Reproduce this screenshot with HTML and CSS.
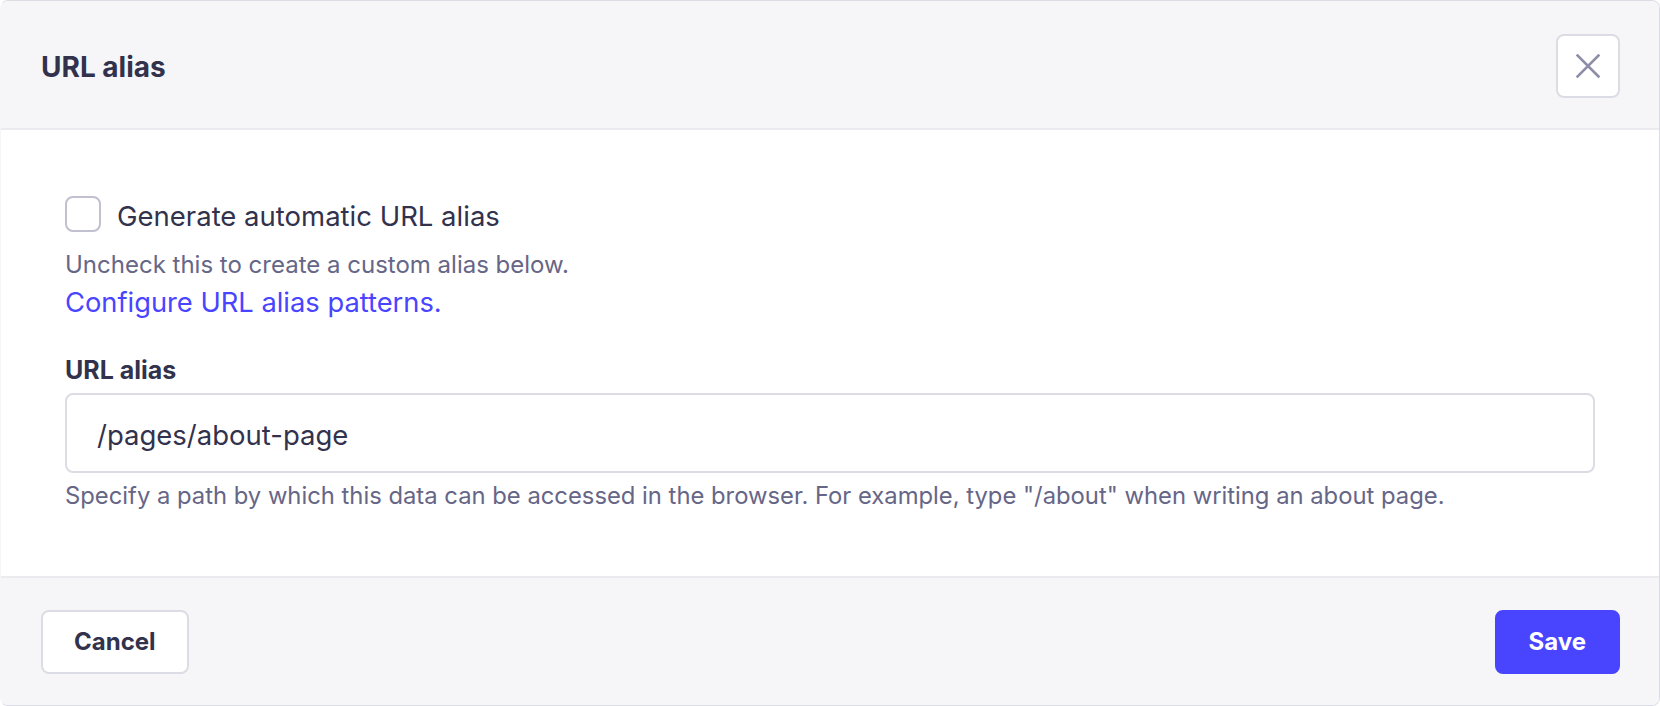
FILE: index.html
```html
<!DOCTYPE html>
<html lang="en">
<head>
<meta charset="utf-8">
<title>URL alias</title>
<link rel="stylesheet" href="styles.css">
</head>
<body>
<div class="modal">
  <header class="modal-header">
    <h2 class="modal-title">URL alias</h2>
    <button class="icon-button" type="button" aria-label="Close">
      <svg width="24" height="24" viewBox="0 0 24 24" fill="none">
        <path d="M1.5 1.5 L22.5 22.5 M22.5 1.5 L1.5 22.5" stroke="#8e8ea9" stroke-width="2.6" stroke-linecap="square"/>
      </svg>
    </button>
  </header>
  <main class="modal-body">
    <label class="check-row">
      <span class="checkbox"></span>
      <span class="check-label">Generate automatic URL alias</span>
    </label>
    <p class="hint hint-first">Uncheck this to create a custom alias below.</p>
    <a class="link" href="#">Configure URL alias patterns.</a>
    <div class="field-label">URL alias</div>
    <div class="input">/pages/about-page</div>
    <p class="hint hint-field">Specify a path by which this data can be accessed in the browser. For example, type "/about" when writing an about page.</p>
  </main>
  <footer class="modal-footer">
    <button class="btn btn-secondary" type="button">Cancel</button>
    <button class="btn btn-primary" type="button">Save</button>
  </footer>
</div>
</body>
</html>
```
FILE: styles.css
```css
html, body {
  margin: 0;
  padding: 0;
  background: #ffffff;
}
body {
  font-family: Inter, "Noto Sans", "Liberation Sans", sans-serif;
  color: #32324d;
}
.modal {
  width: 1660px;
  height: 706px;
  box-sizing: border-box;
  border: 1px solid #dcdce4;
  border-left-color: #f6f6f9;
  border-radius: 8px;
  overflow: hidden;
  display: flex;
  flex-direction: column;
  background: #ffffff;
}
.modal-header {
  height: 129px;
  box-sizing: border-box;
  flex: none;
  background: #f6f6f9;
  border-bottom: 2px solid #eaeaef;
  display: flex;
  align-items: center;
  justify-content: space-between;
  padding: 2px 39px 0 40px;
}
.modal-title {
  margin: 0;
  padding-top: 2px;
  font-size: 28px;
  font-weight: 700;
  line-height: 40px;
  color: #32324d;
}
.icon-button {
  width: 64px;
  height: 64px;
  box-sizing: border-box;
  border: 2px solid #dcdce4;
  border-radius: 8px;
  background: #ffffff;
  display: flex;
  align-items: center;
  justify-content: center;
  padding: 0;
}
.modal-body {
  flex: 1;
  padding: 64px 64px 0;
  display: flex;
  flex-direction: column;
  align-items: flex-start;
}
.check-row {
  display: flex;
  align-items: center;
  gap: 16px;
  height: 40px;
}
.checkbox {
  width: 36px;
  height: 36px;
  box-sizing: border-box;
  border: 2px solid #c0c0cf;
  border-radius: 8px;
  background: #ffffff;
}
.check-label {
  font-size: 27.5px;
  line-height: 40px;
  color: #32324d;
  padding-top: 4px;
}
.hint {
  margin: 0;
  font-size: 24px;
  line-height: 32px;
  color: #666687;
}
.hint-first {
  margin-top: 15px;
}
.link {
  margin-top: 4px;
  font-size: 27.3px;
  line-height: 36px;
  color: #4945ff;
  text-decoration: none;
}
.field-label {
  margin-top: 33px;
  font-size: 25px;
  line-height: 32px;
  font-weight: 700;
  color: #32324d;
}
.input {
  margin-top: 7px;
  align-self: stretch;
  height: 80px;
  box-sizing: border-box;
  border: 2px solid #dcdce4;
  border-radius: 8px;
  padding: 3px 30px 0;
  display: flex;
  align-items: center;
  font-size: 27.5px;
  color: #32324d;
}
.hint-field {
  margin-top: 7px;
  font-size: 23.8px;
}
.modal-footer {
  height: 129px;
  box-sizing: border-box;
  flex: none;
  background: #f6f6f9;
  border-top: 2px solid #eaeaef;
  display: flex;
  align-items: center;
  justify-content: space-between;
  padding: 0 39px 0 40px;
}
.btn {
  height: 64px;
  box-sizing: border-box;
  border-radius: 8px;
  font-family: inherit;
  font-size: 24px;
  font-weight: 700;
  line-height: 32px;
}
.btn-secondary {
  padding: 0 31px;
  border: 2px solid #dcdce4;
  background: #ffffff;
  color: #32324d;
}
.btn-primary {
  padding: 0 32px;
  border: 2px solid #4945ff;
  background: #4945ff;
  color: #ffffff;
}
```
